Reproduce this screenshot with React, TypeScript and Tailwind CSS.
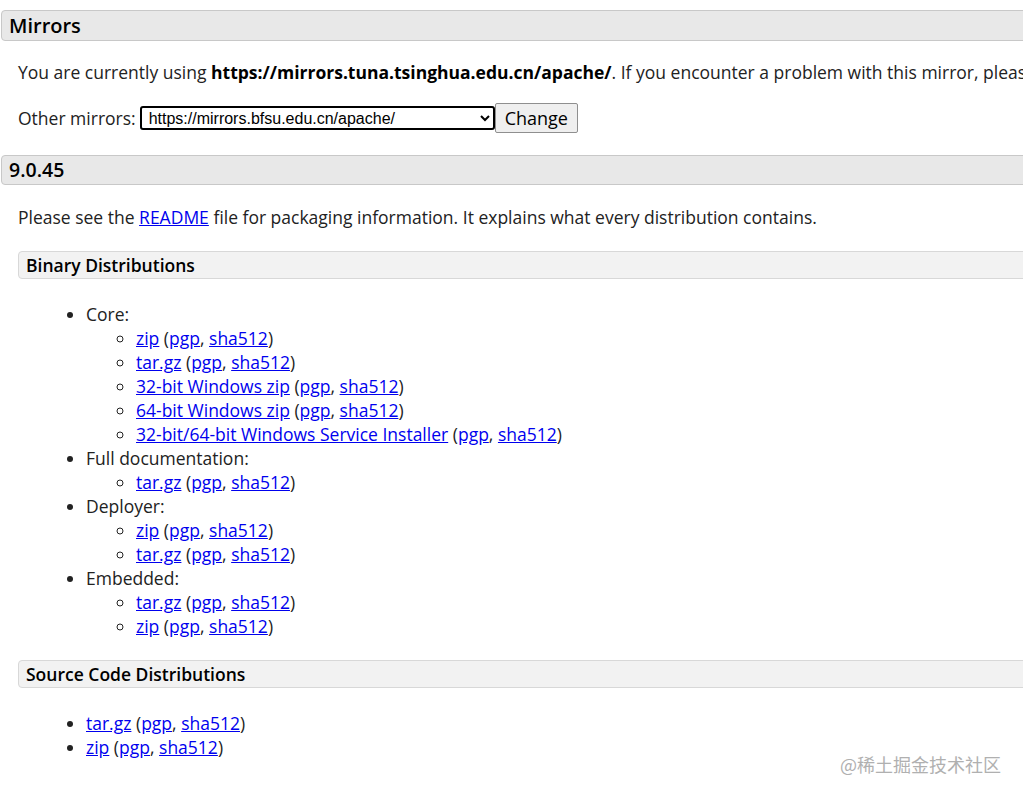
const links = "text-[#0000ee] underline";

function Dl({ label }: { label: string }) {
  return (
    <>
      <a href="#" className={links}>{label}</a> (
      <a href="#" className={links}>pgp</a>,{" "}
      <a href="#" className={links}>sha512</a>)
    </>
  );
}

const groups: { title: string; items: string[] }[] = [
  {
    title: "Core:",
    items: ["zip", "tar.gz", "32-bit Windows zip", "64-bit Windows zip", "32-bit/64-bit Windows Service Installer"],
  },
  { title: "Full documentation:", items: ["tar.gz"] },
  { title: "Deployer:", items: ["zip", "tar.gz"] },
  { title: "Embedded:", items: ["tar.gz", "zip"] },
];

export default function App() {
  return (
    <div
      className="relative w-[1023px] h-[797px] overflow-hidden bg-white text-[#222] text-[17.5px] leading-[24px]"
      style={{ fontFamily: '"Open Sans", "Liberation Sans", sans-serif' }}
    >
      <div className="w-[1400px] pt-[10px]">
        {/* Mirrors */}
        <h2 className="ml-[1px] h-[31px] flex items-center pl-[7px] bg-[#e8e8e8] border border-[#c8c8c8] rounded-[4px] text-[20px] font-semibold text-black">
          Mirrors
        </h2>
        <div className="pl-[18px]">
          <p className="mt-[19px] whitespace-nowrap">
            You are currently using <b className="font-bold text-black">https://mirrors.tuna.tsinghua.edu.cn/apache/</b>. If you encounter a problem with this mirror, please select another mirror. If all mirrors are failing, there are backup mirrors (at the end of the mirrors list) that should be available.
          </p>
          <div className="mt-[19px] flex items-center">
            <span>Other mirrors:</span>
            <select
              className="ml-[4px] w-[355px] h-[24px] border-2 border-black rounded-[3px] text-[16px] text-black pl-[3px] bg-white"
              style={{ fontFamily: '"Liberation Sans", Arial, sans-serif' }}
              defaultValue="bfsu"
            >
              <option value="bfsu">https://mirrors.bfsu.edu.cn/apache/</option>
            </select>
            <button className="h-[30px] px-[9px] bg-[#efefef] border border-[#8f8f8f] rounded-[2px] text-[18px] text-black">
              Change
            </button>
          </div>
        </div>

        {/* 9.0.45 */}
        <h2 className="mt-[22px] ml-[1px] h-[30px] flex items-center pl-[7px] bg-[#e8e8e8] border border-[#c8c8c8] rounded-[4px] text-[19.5px] font-semibold text-black">
          9.0.45
        </h2>
        <div className="pl-[18px]">
          <p className="mt-[20px] whitespace-nowrap">
            Please see the <a href="#" className={links}>README</a> file for packaging information. It explains what every distribution contains.
          </p>

          <h3 className="mt-[22px] h-[28px] flex items-center pl-[7px] bg-[#f2f2f2] border border-[#d8d8d8] rounded-[4px] text-[17.5px] font-semibold text-black">
            Binary Distributions
          </h3>
          <ul className="mt-[23px] ml-[68px] list-disc">
            {groups.map((g) => (
              <li key={g.title}>
                {g.title}
                <ul className="ml-[50px] list-[circle]">
                  {g.items.map((it, i) => (
                    <li key={i}>
                      <Dl label={it} />
                    </li>
                  ))}
                </ul>
              </li>
            ))}
          </ul>

          <h3 className="mt-[22px] h-[28px] flex items-center pl-[7px] bg-[#f2f2f2] border border-[#d8d8d8] rounded-[4px] text-[17.5px] font-semibold text-black">
            Source Code Distributions
          </h3>
          <ul className="mt-[23px] ml-[68px] list-disc">
            <li><Dl label="tar.gz" /></li>
            <li><Dl label="zip" /></li>
          </ul>
        </div>
      </div>

      <div
        className="absolute left-[840px] top-[752px] text-[18px] text-[#b0b0b0]"
        style={{ fontFamily: '"Noto Sans CJK SC", sans-serif' }}
      >
        @稀土掘金技术社区
      </div>
    </div>
  );
}
